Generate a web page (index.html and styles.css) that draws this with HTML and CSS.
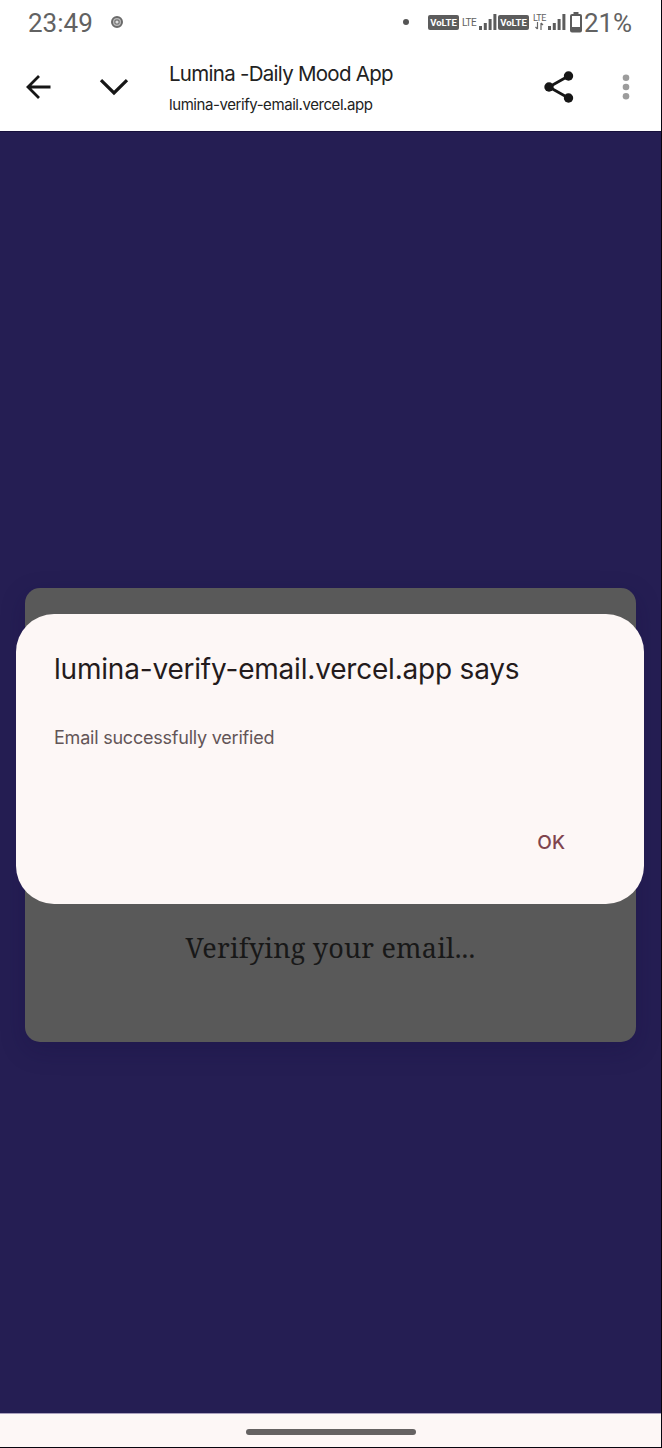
FILE: index.html
```html
<!DOCTYPE html>
<html lang="en">
<head>
<meta charset="utf-8">
<title>Lumina -Daily Mood App</title>
<link rel="stylesheet" href="styles.css">
</head>
<body>
<div class="screen">
  <header class="status">
    <span class="clock">23:49</span>
    <svg class="ring" width="14" height="14" viewBox="0 0 14 14"><circle cx="7" cy="7" r="5" fill="#bbb" stroke="#6a6a6a" stroke-width="2"/><circle cx="7" cy="7" r="2.2" fill="#ddd" stroke="#777" stroke-width="1.2"/></svg>
    <span class="dot"></span>
    <span class="volte">VoLTE</span>
    <span class="lte">LTE</span>
    <svg class="bars" width="18" height="16" viewBox="0 0 18 16" fill="#5c5c5c"><path d="M0 12h3v4H0zM4.8 9h3v7h-3zM9.6 5h3v11h-3zM14.4 0h3v16h-3z"/></svg>
    <span class="volte second">VoLTE</span>
    <span class="lte-stack"><span class="lte-small">LTE</span><svg width="9" height="8" viewBox="0 0 9 8" fill="none" stroke="#666" stroke-width="1.2"><path d="M2.500 0v7M.5 5l2 2M6 8V1M8 3L6 1"/></svg></span>
    <svg class="bars" width="18" height="16" viewBox="0 0 18 16" fill="#5c5c5c"><path d="M0 12h3v4H0zM4.8 9h3v7h-3zM9.6 5h3v11h-3zM14.4 0h3v16h-3z"/></svg>
    <svg class="battery" width="12" height="21" viewBox="0 0 12 21"><path d="M3.5 0h5v3h-5z" fill="#5c5c5c"/><rect x="1" y="3" width="10" height="16.5" rx="1" fill="none" stroke="#5c5c5c" stroke-width="2"/><path d="M1 15h10v5H1z" fill="#5c5c5c"/></svg>
    <span class="percent">21%</span>
  </header>
  <div class="toolbar">
    <svg class="back" width="26" height="26" viewBox="0 0 26 26" fill="none" stroke="#161616" stroke-width="2.8"><path d="M25.500 13H3M14 2L3 13l11 11"/></svg>
    <svg class="chevron" width="30" height="18" viewBox="0 0 30 18" fill="none" stroke="#161616" stroke-width="3.2"><path d="M2 2.2L15 15 28 2.2"/></svg>
    <div class="site">
      <span class="site-title">Lumina -Daily Mood App</span>
      <span class="site-url">lumina-verify-email.vercel.app</span>
    </div>
    <svg class="share" width="30" height="32" viewBox="0 0 30 32" fill="#161616"><path d="M24.5 5L5 16l19.500 11" fill="none" stroke="#161616" stroke-width="2.800"/><circle cx="24.500" cy="5" r="4.700"/><circle cx="5" cy="16" r="4.700"/><circle cx="24.500" cy="27" r="4.700"/></svg>
    <svg class="more" width="8" height="26" viewBox="0 0 8 26" fill="#9c9c9c"><circle cx="4" cy="3.700" r="3.300"/><circle cx="4" cy="13" r="3.300"/><circle cx="4" cy="22.300" r="3.300"/></svg>
  </div>
  <main class="page">
    <section class="card"><p class="card-text">Verifying your email...</p></section>
    <div class="dialog">
      <h1 class="dialog-title">lumina-verify-email.vercel.app says</h1>
      <p class="dialog-message">Email successfully verified</p>
      <button class="ok">OK</button>
    </div>
  </main>
  <footer class="nav"><span class="handle"></span></footer>
</div>
</body>
</html>
```
FILE: styles.css
```css
* { box-sizing: border-box; }
body { margin: 0; background: #000; font-family: Roboto, sans-serif; }
.screen { width: 662px; height: 1448px; display: flex; flex-direction: column; border-right: 1px solid #08060f; border-bottom: 1px solid #08060f; background: #fff; overflow: hidden; }
.screen svg { flex: none; }
.status { height: 45px; display: flex; align-items: center; padding: 0 0 1px 28px; color: #626262; white-space: nowrap; }
.clock { width: 82px; font-size: 26px; padding-top: 1px; }
.dot { width: 6px; height: 6px; border-radius: 50%; background: #555; margin: 0 19px 0 279px; flex: none; }
.volte { width: 31px; height: 15px; flex: none; border-radius: 2px; background: #5c5c5c; color: #fff; font-size: 9.5px; font-weight: 700; line-height: 15px; text-align: center; }
.lte { width: 17px; flex: none; margin-left: 3px; font-size: 10px; letter-spacing: -0.5px; }
.second { margin-left: 1px; }
.lte-stack { width: 17px; flex: none; display: flex; flex-direction: column; align-items: center; margin-left: 2px; }
.lte-small { font-size: 9px; line-height: 8px; letter-spacing: -0.3px; }
.battery { margin-left: 4px; }
.percent { font-size: 26px; padding-top: 1px; margin-left: 2px; letter-spacing: -0.1px; }
.toolbar { height: 86px; display: flex; align-items: center; padding: 0 0 3px 25px; background: #fff; }
.chevron { margin-left: 48px; }
.site { width: 375px; margin-left: 40px; display: flex; flex-direction: column; gap: 6px; color: #222; white-space: nowrap; font-family: Inter, sans-serif; }
.site-title { font-size: 20.5px; line-height: 28px; letter-spacing: -0.72px; padding-top: 1px; margin-bottom: -1px; }
.site-url { font-size: 15px; line-height: 22px; letter-spacing: -0.43px; padding-top: 1px; margin-bottom: -1px; }
.more { margin-left: 48px; }
.page { position: relative; flex: 1; background: #251e53; border-top: 1px solid #17103c; padding: 456px 25px 0; }
.card { height: 454px; border-radius: 15px; background: #595959; box-shadow: 0 8px 24px rgba(20, 10, 65, .25); padding-top: 340px; text-align: center; }
.card-text { margin: 0; color: #181818; font: 27px/40px "Noto Serif", "DejaVu Serif", serif; letter-spacing: 0.2px; white-space: nowrap; }
.dialog { position: absolute; left: 16px; top: 482px; width: 628px; height: 290px; border-radius: 38px; background: #fdf7f6; display: flex; flex-direction: column; padding: 36px 38px; white-space: nowrap; }
.dialog-title { margin: 0; font-family: Inter, sans-serif; font-size: 28px; line-height: 38px; font-weight: 400; letter-spacing: -0.2px; color: #241b1c; }
.dialog-message { margin: 38px 0 0; font-family: Inter, sans-serif; font-size: 18px; line-height: 24px; letter-spacing: -0.22px; color: #635557; }
.ok { align-self: flex-end; margin: 80px 41px 0 0; padding: 0; border: 0; background: none; color: #80444e; font: 500 19px/26px Inter, sans-serif; }
.nav { height: 34px; flex: none; display: flex; align-items: center; justify-content: center; background: #fdf7f6; border-top: 1px solid #aaa0bd; padding-top: 3px; }
.handle { width: 170px; height: 6px; border-radius: 3px; background: #656262; }
```
